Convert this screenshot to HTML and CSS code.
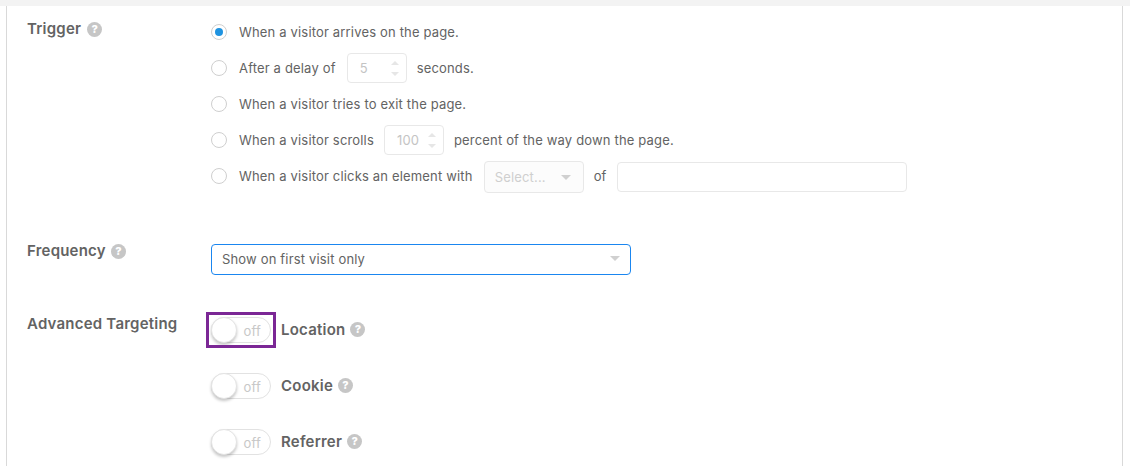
FILE: index.html
```html
<!DOCTYPE html>
<html lang="en">
<head>
    <meta charset="UTF-8">
    <title>Popup Settings</title>
    <link rel="stylesheet" href="styles.css">
</head>
<body>
    <div class="top-band"></div>
    <div class="panel">
        <div class="form-row trigger-row">
            <div class="row-label">Trigger <span class="help">?</span></div>
            <div class="row-body">
                <div class="radio-row">
                    <span class="radio checked"></span>
                    <span>When a visitor arrives on the page.</span>
                </div>
                <div class="radio-row">
                    <span class="radio"></span>
                    <span>After a delay of</span>
                    <div class="number-box delay-box">
                        <span>5</span>
                        <div class="stepper"><i class="up"></i><i class="down"></i></div>
                    </div>
                    <span>seconds.</span>
                </div>
                <div class="radio-row">
                    <span class="radio"></span>
                    <span>When a visitor tries to exit the page.</span>
                </div>
                <div class="radio-row">
                    <span class="radio"></span>
                    <span>When a visitor scrolls</span>
                    <div class="number-box scroll-box">
                        <span>100</span>
                        <div class="stepper"><i class="up"></i><i class="down"></i></div>
                    </div>
                    <span>percent of the way down the page.</span>
                </div>
                <div class="radio-row">
                    <span class="radio"></span>
                    <span>When a visitor clicks an element with</span>
                    <div class="select-box">
                        <span>Select...</span>
                        <i class="caret"></i>
                    </div>
                    <span>of</span>
                    <input type="text" class="text-box" disabled>
                </div>
            </div>
        </div>

        <div class="form-row frequency-row">
            <div class="row-label">Frequency <span class="help">?</span></div>
            <div class="row-body">
                <div class="frequency-select">
                    <span>Show on first visit only</span>
                    <i class="caret"></i>
                </div>
            </div>
        </div>

        <div class="form-row targeting-row">
            <div class="row-label">Advanced Targeting</div>
            <div class="row-body">
                <div class="toggle-row">
                    <div class="toggle highlighted"><span class="knob"></span><span class="toggle-text">off</span></div>
                    <span class="toggle-label">Location</span> <span class="help">?</span>
                </div>
                <div class="toggle-row">
                    <div class="toggle"><span class="knob"></span><span class="toggle-text">off</span></div>
                    <span class="toggle-label">Cookie</span> <span class="help">?</span>
                </div>
                <div class="toggle-row">
                    <div class="toggle"><span class="knob"></span><span class="toggle-text">off</span></div>
                    <span class="toggle-label">Referrer</span> <span class="help">?</span>
                </div>
            </div>
        </div>
    </div>
</body>
</html>
```

FILE: styles.css
```css
html, body {
    height: 100%;
}
body {
    margin: 0;
    overflow: hidden;
    font-family: 'Inter', 'Liberation Sans', sans-serif;
    font-size: 13px;
    letter-spacing: 0.17px;
    color: #636363;
    background-color: #fff;
}
.top-band {
    height: 6px;
    background-color: #f3f3f3;
}
.panel {
    margin: 0 7px 0 6px;
    height: 460px;
    border-left: 1px solid #d9d9d9;
    border-right: 1px solid #d9d9d9;
    box-sizing: border-box;
}
.form-row {
    display: flex;
}
.row-label {
    width: 184px;
    padding-left: 20px;
    flex-shrink: 0;
    font-size: 15px;
    font-weight: 600;
    letter-spacing: 0.22px;
    line-height: 18px;
    display: flex;
    align-items: center;
    align-self: flex-start;
    gap: 5px;
}
.help {
    display: inline-flex;
    align-items: center;
    justify-content: center;
    width: 15px;
    height: 15px;
    border-radius: 50%;
    background-color: #c6c6c6;
    color: #fff;
    font-size: 11px;
    font-weight: 800;
    letter-spacing: 0;
    line-height: 1;
}
.trigger-row {
    padding-top: 8px;
}
.trigger-row .row-label {
    margin-top: 6px;
}
.trigger-row .help {
    margin-left: 1px;
}
.radio-row {
    display: flex;
    align-items: center;
    height: 36px;
}
.radio {
    width: 14px;
    height: 14px;
    border: 1px solid #cfcfcf;
    border-radius: 50%;
    margin-right: 12px;
    display: flex;
    align-items: center;
    justify-content: center;
    flex-shrink: 0;
}
.radio.checked::after {
    content: "";
    width: 8px;
    height: 8px;
    border-radius: 50%;
    background-color: #1f93e0;
}
.number-box {
    display: flex;
    align-items: center;
    justify-content: space-between;
    height: 30px;
    width: 60px;
    box-sizing: border-box;
    margin: 0 10px;
    padding: 0 7px 0 12px;
    border: 1px solid #e8e8e8;
    border-radius: 4px;
    color: #c4c4c4;
}
.delay-box {
    margin-left: 11px;
}
.stepper {
    display: flex;
    flex-direction: column;
    gap: 7px;
}
.stepper i {
    display: block;
    width: 0;
    height: 0;
    border-left: 4px solid transparent;
    border-right: 4px solid transparent;
}
.stepper .up {
    border-bottom: 4px solid #e6e6e6;
}
.stepper .down {
    border-top: 4px solid #e6e6e6;
}
.select-box {
    display: flex;
    align-items: center;
    justify-content: space-between;
    width: 100px;
    height: 32px;
    box-sizing: border-box;
    margin: 2px 10px 0 11px;
    padding: 0 12px 0 10px;
    border: 1px solid #e8e8e8;
    border-radius: 4px;
    background-color: #fcfcfc;
    color: #cfcfcf;
}
.caret {
    display: block;
    width: 0;
    height: 0;
    border-left: 5px solid transparent;
    border-right: 5px solid transparent;
    border-top: 5px solid #d0d0d0;
}
.text-box {
    width: 290px;
    height: 30px;
    box-sizing: border-box;
    margin: 2px 0 0 10px;
    border: 1px solid #e8e8e8;
    border-radius: 4px;
    background-color: #fff;
}
.frequency-row {
    padding-top: 50px;
}
.frequency-row .row-label {
    margin-top: -2px;
}
.frequency-select {
    display: flex;
    align-items: center;
    justify-content: space-between;
    width: 420px;
    height: 31px;
    box-sizing: border-box;
    padding: 0 10px 2px;
    border: 1px solid #1a86f0;
    border-radius: 4px;
}
.targeting-row {
    padding-top: 42px;
}
.targeting-row .row-label {
    margin-top: -2px;
}
.toggle-row {
    display: flex;
    align-items: center;
    height: 26px;
    margin-bottom: 30px;
}
.toggle {
    position: relative;
    width: 60px;
    height: 26px;
    box-sizing: border-box;
    border: 1px solid #e2e2e2;
    border-radius: 13px;
    margin-right: 10px;
    flex-shrink: 0;
}
.toggle.highlighted::after {
    content: "";
    position: absolute;
    top: -6px;
    left: -6px;
    right: -6px;
    bottom: -6px;
    border: 3px solid #7b2795;
}
.knob {
    position: absolute;
    left: -1px;
    top: -1px;
    width: 26px;
    height: 26px;
    box-sizing: border-box;
    border-radius: 50%;
    background-color: #fff;
    border: 1px solid #e4e4e4;
    box-shadow: 0 2px 3px rgba(0, 0, 0, 0.22);
}
.toggle-text {
    position: absolute;
    right: 9px;
    top: 5px;
    font-size: 13px;
    color: #c8c8c8;
}
.toggle-label {
    font-size: 15px;
    font-weight: 600;
    letter-spacing: 0.22px;
    margin-right: 5px;
    margin-bottom: 2px;
}
.toggle-row .help {
    margin-bottom: 2px;
}
```
